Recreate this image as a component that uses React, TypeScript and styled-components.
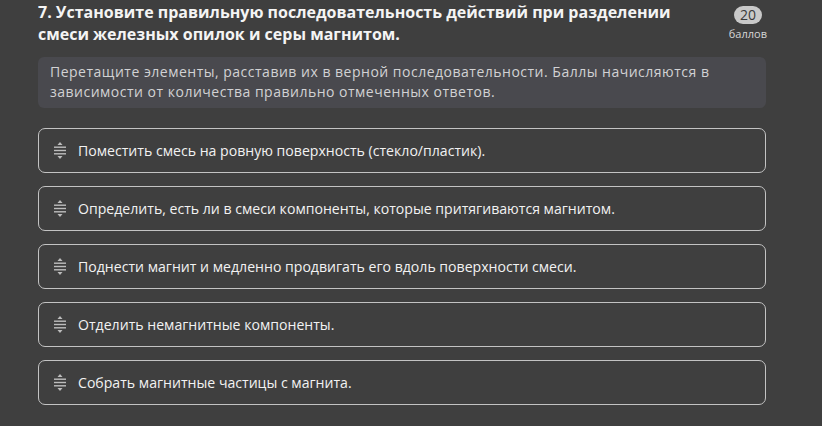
import React from "react";
import styled, { createGlobalStyle } from "styled-components";

const GlobalStyle = createGlobalStyle`
  html, body {
    margin: 0;
    padding: 0;
    background: #3f3f3f;
  }
  body {
    font-family: "Open Sans", "Noto Sans", sans-serif;
  }
`;

const steps = [
  "Поместить смесь на ровную поверхность (стекло/пластик).",
  "Определить, есть ли в смеси компоненты, которые притягиваются магнитом.",
  "Поднести магнит и медленно продвигать его вдоль поверхности смеси.",
  "Отделить немагнитные компоненты.",
  "Собрать магнитные частицы с магнита.",
];

function DragHandle() {
  return (
    <svg width="12" height="17" viewBox="0 0 12 17" fill="#bdbdbd">
      <polygon points="6,0 8.5,3 3.5,3" />
      <rect x="0" y="4.5" width="12" height="1.4" />
      <rect x="0" y="7.8" width="12" height="1.4" />
      <rect x="0" y="11.1" width="12" height="1.4" />
      <polygon points="6,17 8.5,14 3.5,14" />
    </svg>
  );
}

export default function App() {
  return (
    <>
      <GlobalStyle />
      <Page>
        <Header>
          <Title>
            7. Установите правильную последовательность действий при разделении
            <br />
            смеси железных опилок и серы магнитом.
          </Title>
          <Points>
            <PointsBadge>20</PointsBadge>
            <PointsLabel>баллов</PointsLabel>
          </Points>
        </Header>
        <Hint>
          Перетащите элементы, расставив их в верной последовательности. Баллы
          начисляются в<br />
          зависимости от количества правильно отмеченных ответов.
        </Hint>
        <List>
          {steps.map((s) => (
            <Item key={s}>
              <DragHandle />
              <ItemText>{s}</ItemText>
            </Item>
          ))}
        </List>
      </Page>
    </>
  );
}

const Page = styled.div`
  width: 728px;
  padding: 1px 0 0 38px;
  display: flex;
  flex-direction: column;
`;

const Header = styled.div`
  display: flex;
  justify-content: space-between;
  align-items: flex-start;
`;

const Title = styled.h2`
  margin: 0;
  width: 680px;
  font-size: 16px;
  font-weight: 700;
  line-height: 22px;
  color: #f4f4f4;
  white-space: nowrap;
`;

const Points = styled.div`
  display: flex;
  flex-direction: column;
  align-items: center;
  padding-top: 5px;
  margin-right: -1px;
`;

const PointsBadge = styled.div`
  min-width: 26px;
  height: 18px;
  padding: 0 1px;
  border-radius: 9px;
  background: #c9c9c9;
  color: #3a3a3a;
  font-size: 14px;
  line-height: 18px;
  text-align: center;
`;

const PointsLabel = styled.div`
  margin-top: 2px;
  font-size: 11px;
  color: #d6d6d6;
`;

const Hint = styled.div`
  margin-top: 12px;
  padding: 5px 12px 6px;
  border-radius: 6px;
  background: #49494e;
  color: #d2d2d4;
  font-size: 14px;
  letter-spacing: 0.5px;
  line-height: 20px;
  white-space: nowrap;
`;

const List = styled.div`
  margin-top: 20px;
  display: flex;
  flex-direction: column;
  gap: 13px;
`;

const Item = styled.div`
  height: 45px;
  box-sizing: border-box;
  border: 1.5px solid #c3c3c3;
  border-radius: 7px;
  display: flex;
  align-items: center;
  gap: 12px;
  padding-left: 15px;
`;

const ItemText = styled.span`
  font-size: 14.1px;
  color: #f2f2f2;
`;
